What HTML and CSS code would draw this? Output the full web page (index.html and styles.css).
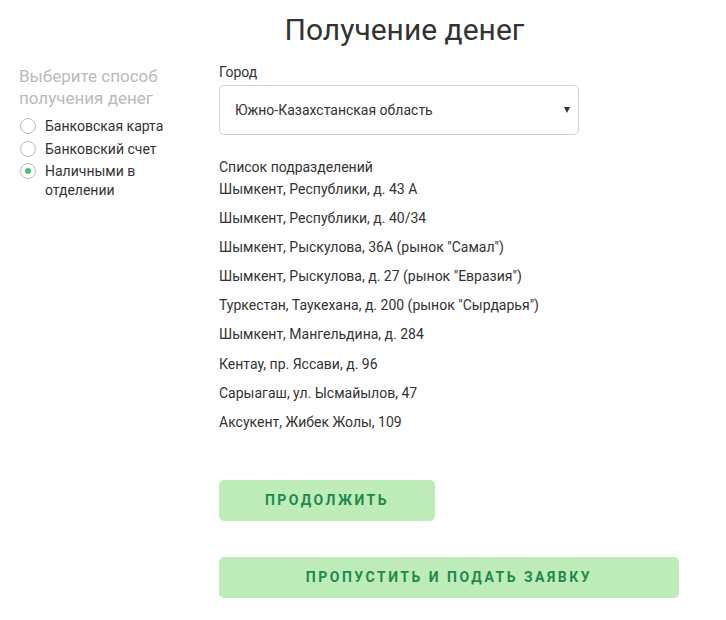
FILE: index.html
```html
<!DOCTYPE html>
<html lang="ru">
<head>
<meta charset="utf-8">
<link rel="stylesheet" href="styles.css">
</head>
<body>
<div class="page">
  <h1 class="title">Получение денег</h1>
  <div class="layout">
    <aside class="side">
      <div class="side-head">Выберите способ получения денег</div>
      <ul class="radios">
        <li class="radio"><span class="dot"></span><span class="rlabel">Банковская карта</span></li>
        <li class="radio"><span class="dot"></span><span class="rlabel">Банковский счет</span></li>
        <li class="radio checked"><span class="dot"></span><span class="rlabel">Наличными в отделении</span></li>
      </ul>
    </aside>
    <main class="main">
      <div class="label">Город</div>
      <div class="select">
        <span class="select-text">Южно-Казахстанская область</span>
        <span class="arrow"></span>
      </div>
      <div class="list-head">Список подразделений</div>
      <ul class="list">
        <li>Шымкент, Республики, д. 43 А</li>
        <li>Шымкент, Республики, д. 40/34</li>
        <li>Шымкент, Рыскулова, 36А (рынок "Самал")</li>
        <li>Шымкент, Рыскулова, д. 27 (рынок "Евразия")</li>
        <li>Туркестан, Таукехана, д. 200 (рынок "Сырдарья")</li>
        <li>Шымкент, Мангельдина, д. 284</li>
        <li>Кентау, пр. Яссави, д. 96</li>
        <li>Сарыагаш, ул. Ысмайылов, 47</li>
        <li>Аксукент, Жибек Жолы, 109</li>
      </ul>
      <button class="btn btn-short">ПРОДОЛЖИТЬ</button>
      <button class="btn btn-wide">ПРОПУСТИТЬ И ПОДАТЬ ЗАЯВКУ</button>
    </main>
  </div>
</div>
</body>
</html>
```
FILE: styles.css
```css
* { box-sizing: border-box; }
body {
  margin: 0;
  background: #fff;
  font-family: Roboto, "Noto Sans", sans-serif;
  color: #333;
}
.page { width: 726px; }
.title {
  margin: 0;
  padding: 12px 0 0 83px;
  width: 726px;
  text-align: center;
  font-weight: 400;
  font-size: 30px;
  line-height: 36px;
  color: #333;
}
.layout {
  display: flex;
  padding-top: 14px;
}
.side {
  width: 219px;
  padding-left: 19px;
  flex: none;
}
.side-head {
  width: 160px;
  font-size: 17px;
  line-height: 22px;
  color: #bababa;
  padding-top: 3px;
}
.radios {
  list-style: none;
  margin: 8px 0 0;
  padding: 0;
}
.radio {
  display: flex;
  align-items: flex-start;
  font-size: 14px;
  line-height: 19px;
  margin-bottom: 3.5px;
}
.dot {
  flex: none;
  width: 16px;
  height: 16px;
  border: 1.5px solid #bdbdbd;
  border-radius: 50%;
  margin: 1px 9px 0 1px;
  position: relative;
}
.checked .dot::after {
  content: "";
  position: absolute;
  left: 3.5px;
  top: 3.5px;
  width: 6px;
  height: 6px;
  border-radius: 50%;
  background: #4cbf7a;
}
.rlabel { width: 120px; }
.main {
  flex: 1;
}
.label {
  font-size: 14px;
  line-height: 20px;
}
.select {
  margin-top: 3px;
  width: 360px;
  height: 50px;
  border: 1px solid #d3d3d3;
  border-radius: 5px;
  display: flex;
  align-items: center;
  justify-content: space-between;
  padding: 0 8px 0 15px;
  font-size: 14px;
}
.arrow {
  width: 0;
  height: 0;
  border-left: 3.5px solid transparent;
  border-right: 3.5px solid transparent;
  border-top: 6px solid #333;
}
.list-head {
  margin-top: 22px;
  font-size: 14px;
  line-height: 20px;
}
.list {
  list-style: none;
  margin: 2px 0 0;
  padding: 0;
  font-size: 14px;
  line-height: 20px;
}
.list li { margin-bottom: 9.1px; }
.btn {
  display: flex;
  align-items: center;
  justify-content: center;
  border: none;
  border-radius: 5px;
  background: #bdecb8;
  color: #1d894c;
  font-family: inherit;
  font-weight: 700;
  font-size: 14px;
  letter-spacing: 2.5px;
  height: 41px;
}
.btn-short { width: 216px; margin-top: 48px; }
.btn-wide { width: 460px; margin-top: 36px; }
```
